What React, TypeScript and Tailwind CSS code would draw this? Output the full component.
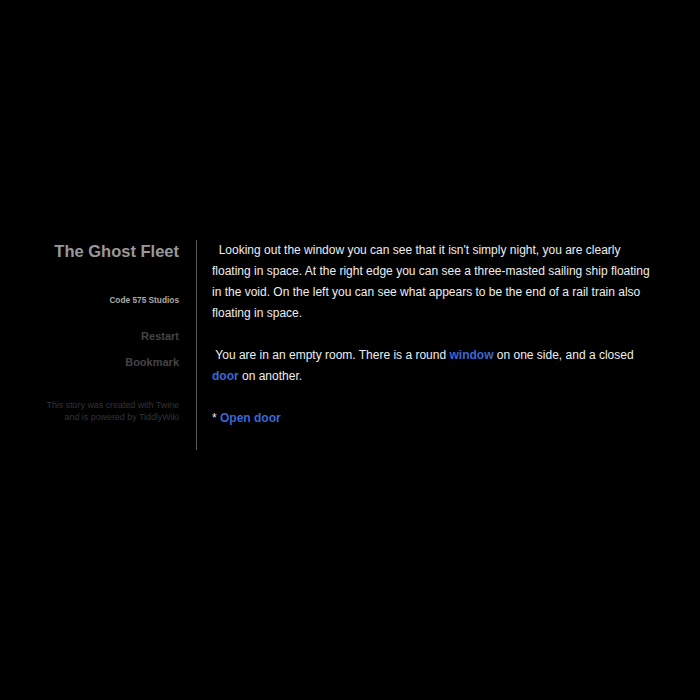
import React from "react";

const Link = ({ children }: { children: React.ReactNode }) => (
  <a href="#" className="font-bold text-[#3b67d6] no-underline">
    {children}
  </a>
);

const Sidebar = () => {
  return (
    <div className="w-[179px] shrink-0 text-right">
      <h1 className="text-[16.5px] font-bold leading-[22px] text-[#999]">The Ghost Fleet</h1>
      <div className="mt-[32px] text-[8.3px] font-bold leading-[12px] text-[#aaa]">Code 575 Studios</div>
      <ul className="mt-[23px] flex flex-col gap-[12px] text-[11px] font-bold leading-[14px] text-[#444]">
        <li>Restart</li>
        <li>Bookmark</li>
      </ul>
      <p className="mt-[30px] text-[8.9px] leading-[12px] text-[#333]">
        This story was created with Twine
        <br />
        and is powered by TiddlyWiki
      </p>
    </div>
  );
};

const App = () => {
  return (
    <div className="min-h-[700px] w-[700px] bg-black pt-[240px] font-['Liberation_Sans',Arial,sans-serif]">
      <div className="flex">
        <Sidebar />
        <div className="ml-[17px] h-[210px] border-l border-[#555]" />
        <div className="ml-[15px] w-[450px] text-[12px] leading-[21px] text-[#eee]">
          <p>
            {"\u00a0\u00a0"}Looking out the window you can see that it isn't simply night, you are clearly floating in
            space. At the right edge you can see a three-masted sailing ship floating in the void. On the left you can
            see what appears to be the end of a rail train also floating in space.
            <br />
            <br />
            {"\u00a0"}You are in an empty room. There is a round <Link>window</Link> on one side, and a closed{" "}
            <Link>door</Link> on another.
            <br />
            <br />* <Link>Open door</Link>
          </p>
        </div>
      </div>
    </div>
  );
};

export default App;
